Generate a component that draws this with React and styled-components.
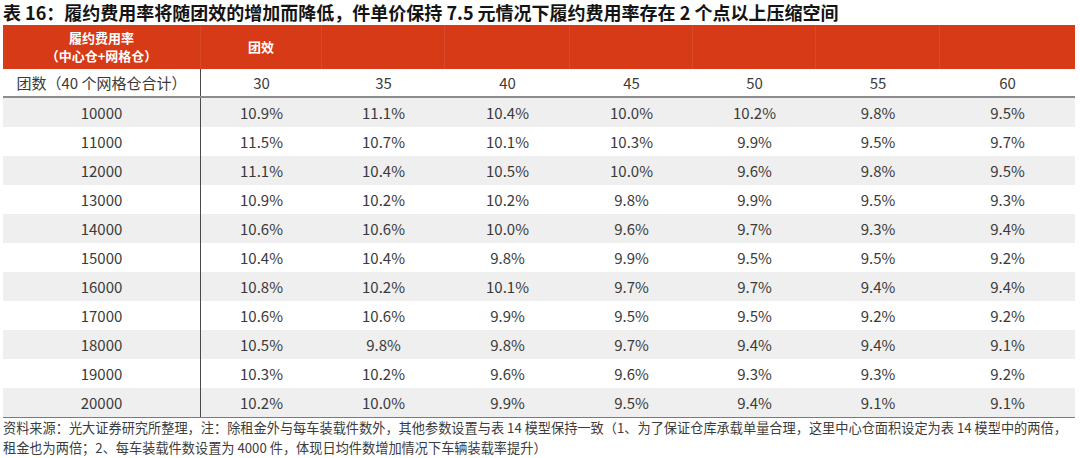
import styled, { createGlobalStyle } from 'styled-components';

const GlobalStyle = createGlobalStyle`
  html, body {
    margin: 0;
    padding: 0;
    background: #ffffff;
  }
  body {
    font-family: 'Noto Sans CJK SC', 'Noto Sans', sans-serif;
    color: #3a3a3a;
  }
`;

const COLUMNS = '198px 121px 123px 125px 123px 123px 124px 1fr';

const efficiencies = [30, 35, 40, 45, 50, 55, 60];

const rows = [
  ['10000', '10.9%', '11.1%', '10.4%', '10.0%', '10.2%', '9.8%', '9.5%'],
  ['11000', '11.5%', '10.7%', '10.1%', '10.3%', '9.9%', '9.5%', '9.7%'],
  ['12000', '11.1%', '10.4%', '10.5%', '10.0%', '9.6%', '9.8%', '9.5%'],
  ['13000', '10.9%', '10.2%', '10.2%', '9.8%', '9.9%', '9.5%', '9.3%'],
  ['14000', '10.6%', '10.6%', '10.0%', '9.6%', '9.7%', '9.3%', '9.4%'],
  ['15000', '10.4%', '10.4%', '9.8%', '9.9%', '9.5%', '9.5%', '9.2%'],
  ['16000', '10.8%', '10.2%', '10.1%', '9.7%', '9.7%', '9.4%', '9.4%'],
  ['17000', '10.6%', '10.6%', '9.9%', '9.5%', '9.5%', '9.2%', '9.2%'],
  ['18000', '10.5%', '9.8%', '9.8%', '9.7%', '9.4%', '9.4%', '9.1%'],
  ['19000', '10.3%', '10.2%', '9.6%', '9.6%', '9.3%', '9.3%', '9.2%'],
  ['20000', '10.2%', '10.0%', '9.9%', '9.5%', '9.4%', '9.1%', '9.1%'],
];

const App = () => (
  <>
    <GlobalStyle />
    <Page>
      <Title>
        表 16：履约费用率将随团效的增加而降低，件单价保持 7.5 元情况下履约费用率存在 2 个点以上压缩空间
      </Title>
      <Table>
        <HeaderRow>
          <HeaderCell>
            <span>履约费用率</span>
            <span>（中心仓+网格仓）</span>
          </HeaderCell>
          <HeaderCell>团效</HeaderCell>
          {efficiencies.slice(1).map((e) => (
            <HeaderCell key={e} />
          ))}
        </HeaderRow>
        <SubHeaderRow>
          <Cell $first>团数（40 个网格仓合计）</Cell>
          {efficiencies.map((e) => (
            <Cell key={e}>{e}</Cell>
          ))}
        </SubHeaderRow>
        {rows.map((row, i) => (
          <DataRow key={row[0]} $shaded={i % 2 === 0} $last={i === rows.length - 1}>
            {row.map((value, j) => (
              <Cell key={j} $first={j === 0}>
                {value}
              </Cell>
            ))}
          </DataRow>
        ))}
      </Table>
      <Note>
        <NoteLine>
          资料来源：光大证券研究所整理，注：除租金外与每车装载件数外，其他参数设置与表 14 模型保持一致（1、为了保证仓库承载单量合理，这里中心仓面积设定为表 14 模型中的两倍，
        </NoteLine>
        <NoteLine>
          租金也为两倍；2、每车装载件数设置为 4000 件，体现日均件数增加情况下车辆装载率提升）
        </NoteLine>
      </Note>
    </Page>
  </>
);

const Page = styled.div`
  width: 1080px;
  height: 458px;
  overflow: hidden;
  padding: 0 5px 0 3px;
  box-sizing: border-box;
`;

const Title = styled.div`
  height: 25px;
  font-size: 18px;
  font-weight: 700;
  color: #141414;
  line-height: 24px;
  white-space: nowrap;
`;

const Table = styled.div`
  display: flex;
  flex-direction: column;
`;

const Row = styled.div`
  display: grid;
  grid-template-columns: ${COLUMNS};
`;

const HeaderRow = styled(Row)`
  height: 44px;
  background: #d63a17;
`;

const HeaderCell = styled.div`
  display: flex;
  flex-direction: column;
  align-items: center;
  justify-content: center;
  color: #ffffff;
  font-size: 13px;
  font-weight: 700;
  line-height: 18px;
  border-right: 1px solid rgba(255, 255, 255, 0.08);

  &:last-child {
    border-right: none;
  }
`;

const SubHeaderRow = styled(Row)`
  height: 27px;
  border-bottom: 2px solid #8c8c8c;
`;

const DataRow = styled(Row)`
  height: 29px;
  background: ${({ $shaded }) => ($shaded ? '#efefef' : '#ffffff')};
  border-bottom: ${({ $last }) => ($last ? '1.5px solid #7a7a7a' : 'none')};
`;

const Cell = styled.div`
  display: flex;
  align-items: center;
  justify-content: center;
  font-size: 15px;
  color: #3a3a3a;
  white-space: nowrap;
  border-right: ${({ $first }) => ($first ? '1px solid #4a4a4a' : 'none')};
`;

const Note = styled.div`
  font-size: 13.2px;
  line-height: 20px;
  color: #3c3c3c;
`;

const NoteLine = styled.div`
  white-space: nowrap;
`;

export default App;
